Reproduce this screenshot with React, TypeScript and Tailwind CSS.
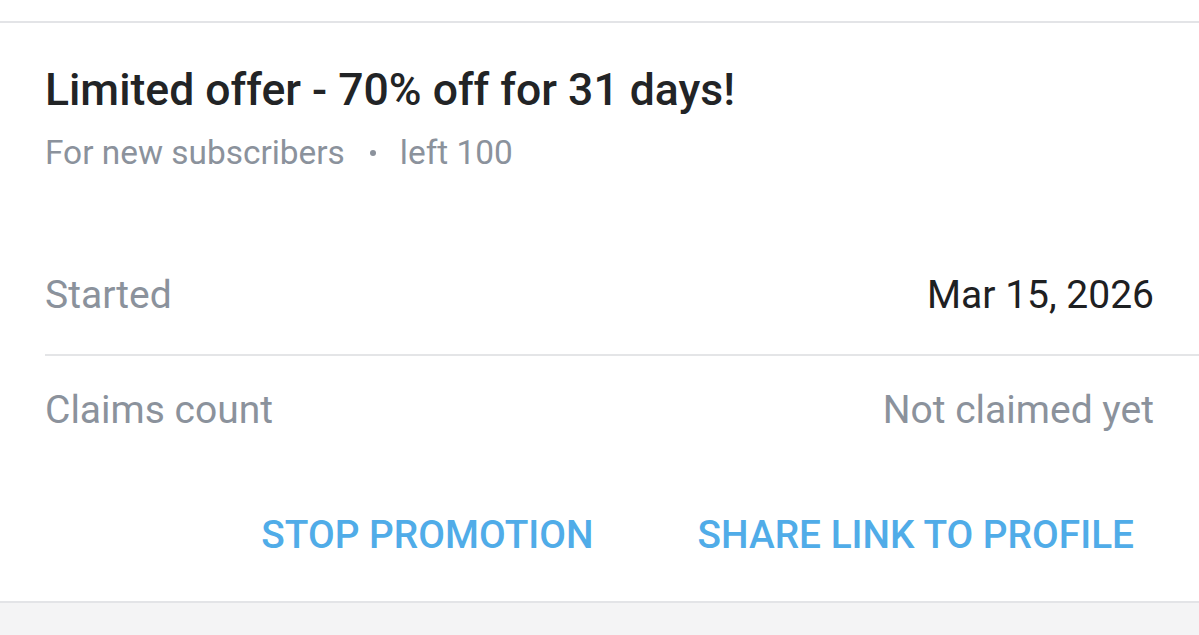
export default function App() {
  return (
    <div className="w-[1199px] h-[635px] bg-[#f4f4f5] overflow-hidden" style={{ fontFamily: "Roboto, 'Liberation Sans', sans-serif" }}>
      <div className="h-[21px] bg-white" />
      <div className="bg-white border-t-2 border-b-2 border-[#e3e4e7] h-[582px] flex flex-col">
        <div className="pl-[45px] pt-[41px]">
          <div className="text-[44.5px] leading-[52px] font-medium text-[#222426]">Limited offer - 70% off for 31 days!</div>
          <div className="mt-[19px] h-[36px] text-[33.4px] leading-[36px] text-[#8b929c] flex items-center">
            <span>For new subscribers</span>
            <span className="ml-[25px] mr-[24px] w-[6px] h-[6px] rounded-full bg-[#8b929c]" />
            <span>left 100</span>
          </div>
        </div>
        <div className="pl-[45px] mt-[104px]">
          <div className="flex justify-between items-center pr-[45px] h-[40px] text-[39px]">
            <span className="text-[#8b929c]">Started</span>
            <span className="text-[#1e2022]">Mar 15, 2026</span>
          </div>
          <div className="mt-[39px] h-[2px] bg-[#e4e5e7]" />
          <div className="mt-[34px] flex justify-between items-center pr-[45px] h-[40px] text-[39px] text-[#8b929c]">
            <span>Claims count</span>
            <span>Not claimed yet</span>
          </div>
        </div>
        <div className="mt-[83px] h-[44px] leading-[44px] flex justify-end pr-[65px] gap-[104px] text-[38.8px] font-medium text-[#50ace8] uppercase">
          <span>Stop promotion</span>
          <span>Share link to profile</span>
        </div>
      </div>
    </div>
  );
}
